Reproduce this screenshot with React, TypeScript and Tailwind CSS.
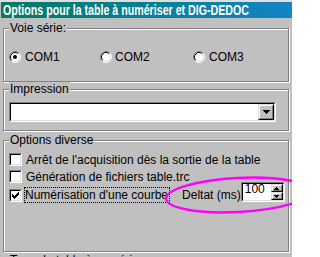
import React from "react";

function Radio({ checked }: { checked?: boolean }) {
  return (
    <svg width="12" height="12" viewBox="0 0 12 12" className="shrink-0">
      <circle cx="6" cy="6" r="5" fill="#fff" />
      <path d="M2.11 9.89 A5.5 5.5 0 0 1 9.89 2.11" stroke="#808080" strokeWidth="1" fill="none" />
      <path d="M9.89 2.11 A5.5 5.5 0 0 1 2.11 9.89" stroke="#fff" strokeWidth="1" fill="none" />
      <path d="M2.82 9.18 A4.5 4.5 0 0 1 9.18 2.82" stroke="#000" strokeWidth="1" fill="none" />
      <path d="M9.18 2.82 A4.5 4.5 0 0 1 2.82 9.18" stroke="#dfdfdf" strokeWidth="1" fill="none" />
      {checked && <circle cx="6" cy="6" r="2" fill="#000" />}
    </svg>
  );
}

function Checkbox({ checked }: { checked?: boolean }) {
  return (
    <div className="h-[13px] w-[13px] shrink-0 border border-t-[#808080] border-l-[#808080] border-r-white border-b-white">
      <div className="h-full w-full border border-t-black border-l-black border-r-[#dfdfdf] border-b-[#dfdfdf] bg-white">
        {checked && (
          <svg width="9" height="9" viewBox="0 0 9 9" shapeRendering="crispEdges">
            <rect x="1" y="3" width="1" height="3" fill="#000" />
            <rect x="2" y="4" width="1" height="3" fill="#000" />
            <rect x="3" y="5" width="1" height="3" fill="#000" />
            <rect x="4" y="4" width="1" height="3" fill="#000" />
            <rect x="5" y="3" width="1" height="3" fill="#000" />
            <rect x="6" y="2" width="1" height="3" fill="#000" />
            <rect x="7" y="1" width="1" height="3" fill="#000" />
          </svg>
        )}
      </div>
    </div>
  );
}

function Raised({ className, children }: { className?: string; children?: React.ReactNode }) {
  return (
    <div className={`border border-t-[#dfdfdf] border-l-[#dfdfdf] border-r-black border-b-black ${className ?? ""}`}>
      <div className="flex h-full w-full items-center justify-center border border-t-white border-l-white border-r-[#808080] border-b-[#808080] bg-[#c0c0c0]">
        {children}
      </div>
    </div>
  );
}

function Group({
  label,
  className,
  children,
}: {
  label: string;
  className?: string;
  children?: React.ReactNode;
}) {
  return (
    <div
      className={`w-[286px] border border-[#808080] shadow-[inset_1px_1px_0_#fff,1px_1px_0_#fff] ${className ?? ""}`}
    >
      <div className="-mt-[8px] ml-[5px] w-fit bg-[#c0c0c0] pr-[1px] pl-[1px] text-[12px] leading-[14px] whitespace-nowrap">
        {label}
      </div>
      {children}
    </div>
  );
}

export default function App() {
  return (
    <div className="relative h-[257px] w-[292px] overflow-hidden bg-[#c0c0c0] font-['Liberation_Sans',Arial,sans-serif] text-[12px] leading-[14px] text-black">
      <div className="h-[2px] bg-[#dfdfdf]" />
      <div className="ml-[1px] h-[16px] overflow-hidden bg-linear-to-r from-[#077a63] to-[#1583c6] pl-[2px] text-[14px] leading-[16px] font-bold whitespace-nowrap text-white">
        <span className="inline-block origin-left scale-x-[0.76]">
          Options pour la table à numériser et DIG-DEDOC
        </span>
      </div>

      <div className="pl-[3px]">
        {/* Voie série */}
        <Group label="Voie série:" className="mt-[10px] h-[54px]">
          <div className="mt-[15px] flex h-[14px] items-center pl-[5px]">
            <div className="flex w-[91px] items-center gap-[4px]">
              <Radio checked />
              <span>COM1</span>
            </div>
            <div className="flex w-[93px] items-center gap-[3px]">
              <Radio />
              <span>COM2</span>
            </div>
            <div className="flex items-center gap-[4px]">
              <Radio />
              <span>COM3</span>
            </div>
          </div>
        </Group>

        {/* Impression */}
        <Group label="Impression" className="mt-[7px] h-[42px]">
          <div className="mt-[6px] ml-[5px] h-[20px] w-[267px] border border-t-[#808080] border-l-[#808080] border-r-white border-b-white">
            <div className="flex h-full w-full justify-end border border-t-black border-l-black border-r-[#dfdfdf] border-b-[#dfdfdf] bg-white">
              <Raised className="h-[16px] w-[16px]">
                <svg width="7" height="4" viewBox="0 0 7 4" shapeRendering="crispEdges">
                  <rect x="0" y="0" width="7" height="1" fill="#000" />
                  <rect x="1" y="1" width="5" height="1" fill="#000" />
                  <rect x="2" y="2" width="3" height="1" fill="#000" />
                  <rect x="3" y="3" width="1" height="1" fill="#000" />
                </svg>
              </Raised>
            </div>
          </div>
        </Group>

        {/* Options diverse */}
        <Group label="Options diverse" className="mt-[9px] h-[112px]">
          <div className="mt-[6px] pl-[5px]">
            <div className="flex h-[17px] items-start">
              <Checkbox />
              <span className="ml-[4px] whitespace-nowrap">Arrêt de l'acquisition dès la sortie de la table</span>
            </div>
            <div className="flex h-[17px] items-start">
              <Checkbox />
              <span className="ml-[4px] whitespace-nowrap">Génération de fichiers table.trc</span>
            </div>
            <div className="flex h-[17px] items-start">
              <div className="mt-[2px]">
                <Checkbox checked />
              </div>
              <span className="ml-[2px] border border-dotted border-black pr-[1px] whitespace-nowrap">
                Numérisation d'une courbe
              </span>
              <span className="mt-[1px] ml-[12px] whitespace-nowrap">Deltat (ms)</span>
              <div className="-mt-[5px] h-[20px] w-[44px] border border-t-[#808080] border-l-[#808080] border-r-white border-b-white">
                <div className="flex h-full w-full border border-t-black border-l-black border-r-[#dfdfdf] border-b-[#dfdfdf] bg-white">
                  <span className="flex-1 pl-[2px] text-[12px] leading-[11px]">100</span>
                  <div className="flex w-[12px] flex-col">
                    <Raised className="h-[8px] w-[12px]">
                      <svg width="5" height="3" viewBox="0 0 5 3" shapeRendering="crispEdges">
                        <rect x="2" y="0" width="1" height="1" fill="#000" />
                        <rect x="1" y="1" width="3" height="1" fill="#000" />
                        <rect x="0" y="2" width="5" height="1" fill="#000" />
                      </svg>
                    </Raised>
                    <Raised className="h-[8px] w-[12px]">
                      <svg width="5" height="3" viewBox="0 0 5 3" shapeRendering="crispEdges">
                        <rect x="0" y="0" width="5" height="1" fill="#000" />
                        <rect x="1" y="1" width="3" height="1" fill="#000" />
                        <rect x="2" y="2" width="1" height="1" fill="#000" />
                      </svg>
                    </Raised>
                  </div>
                </div>
              </div>
            </div>
          </div>
        </Group>

        {/* Cut-off group */}
        <Group label="Type de table à numériser" className="mt-[8px] h-[40px]" />
      </div>

      <svg
        className="pointer-events-none absolute top-0 left-0"
        width="292"
        height="257"
        viewBox="0 0 292 257"
      >
        <ellipse
          cx="238"
          cy="195"
          rx="72"
          ry="17"
          transform="rotate(-3 238 195)"
          fill="none"
          stroke="#ff00ff"
          strokeWidth="2.5"
        />
      </svg>
    </div>
  );
}
